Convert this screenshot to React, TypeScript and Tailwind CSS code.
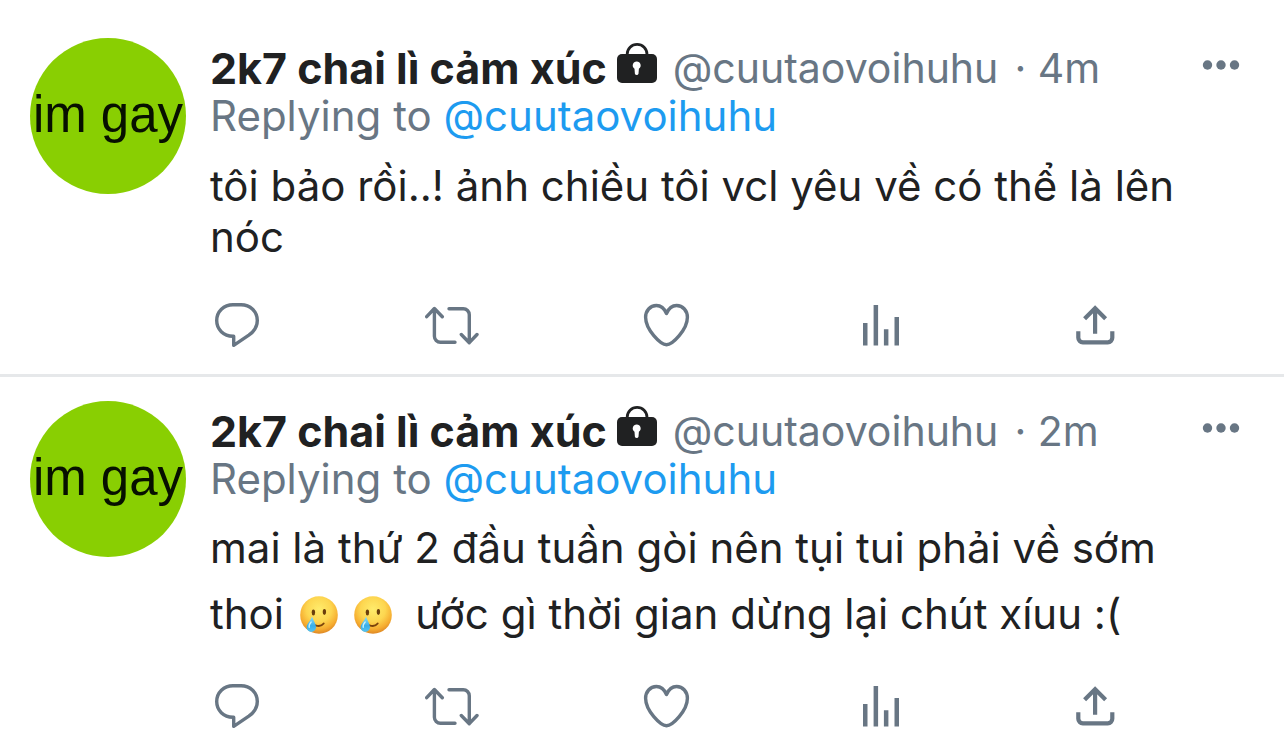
import type { ReactNode } from "react";

const USER = "@cuutaovoihuhu";

function Icon({ children, width = 4 }: { children: ReactNode; width?: number }) {
  return (
    <svg
      viewBox="0 0 54 54"
      className="block size-[54px]"
      fill="none"
      stroke="currentColor"
      strokeWidth={width}
      strokeLinecap="round"
      strokeLinejoin="round"
      aria-hidden="true"
    >
      {children}
    </svg>
  );
}

function Lock() {
  return (
    <svg viewBox="0 0 40 42" className="block h-[42px] w-10" aria-label="Protected account" role="img">
      <path d="M10.2 14V12.2a9.9 9.9 0 0 1 19.8 0V14" fill="none" stroke="#202122" strokeWidth="2.8" />
      <rect x="0" y="12" width="40" height="29" rx="5" fill="#202122" />
      <path d="M19.7 19.400a4 4 0 0 1 2.200 7.300l-.4 5a1.900 1.900 0 0 1-3.600 0l-.4-5a4 4 0 0 1 2.200-7.300z" fill="#fff" />
    </svg>
  );
}

function TearFace({ id }: { id: string }) {
  return (
    <svg viewBox="0 0 38 38" className="ml-1 inline-block size-[38px] align-[-5px]" aria-label="Smiling face with tear" role="img">
      <defs>
        <radialGradient id={id + "-face"} cx="0.5" cy="0.35" r="0.66">
          <stop offset="0" stopColor="#ffec6c" />
          <stop offset="0.5" stopColor="#fdd650" />
          <stop offset="0.8" stopColor="#f6ad30" />
          <stop offset="1" stopColor="#dc8424" />
        </radialGradient>
        <linearGradient id={id + "-tear"} x1="0" y1="0" x2="0" y2="1">
          <stop offset="0" stopColor="#8fe0f8" />
          <stop offset="0.6" stopColor="#39aee9" />
          <stop offset="1" stopColor="#55c5f2" />
        </linearGradient>
      </defs>
      <circle cx="19" cy="19" r="18.8" fill={"url(#" + id + "-face)"} />
      <ellipse cx="13.400" cy="16.500" rx="1.700" ry="2.900" fill="#6b3f0c" />
      <ellipse cx="24.400" cy="16" rx="1.700" ry="2.900" fill="#6b3f0c" />
      <path d="M15.500 29.300c3.200 1.200 6.300.6 8.200-1.800" fill="none" stroke="#7a430b" strokeWidth="1.900" strokeLinecap="round" />
      <path d="M12 20.500c1.500 4.500 4 7.500 4 10.700a4.700 4.700 0 0 1-9.400 0c0-3.200 4-6.200 5.400-10.700z" fill={"url(#" + id + "-tear)"} />
      <path d="M11.200 26c-1.800 2-2.500 3.600-2 5.400" fill="none" stroke="#c5f2fd" strokeWidth="1.300" strokeLinecap="round" />
    </svg>
  );
}

const ACTIONS: { label: string; icon: ReactNode }[] = [
  {
    label: "Reply",
    icon: (
      <Icon width={3.4}>
        <path d="M23 38.300C13.500 38 6.700 31.500 6.700 22.600 6.700 13.600 13.800 6.700 23 6.700h8c9.300 0 16.300 6.900 16.300 15.800 0 6.300-3.300 11-8.500 14.700L23.700 47.300v-9z" />
      </Icon>
    ),
  },
  {
    label: "Retweet",
    icon: (
      <Icon width={3.4}>
        <path d="M1.700 18.700l7.700-8.200 7.900 8.200M9.400 11v27.300a6 6 0 0 0 6 6H30" />
        <path d="M24 10.700h14.300a6 6 0 0 1 6 6V44M36.300 36.500l8 8.200 7.700-8.200" />
      </Icon>
    ),
  },
  {
    label: "Like",
    icon: (
      <Icon width={3.4}>
        <path d="M27.500 15.500C25.400 10.600 22.100 7.500 17.400 7.500 11.100 7.500 6.600 12.900 6.600 19.300c0 12.400 14.900 27.400 20.900 27.400s20.900-15 20.900-27.400c0-6.400-4.500-11.800-10.800-11.800-4.700 0-8 3.100-10.100 8z" />
      </Icon>
    ),
  },
  {
    label: "View analytics",
    icon: (
      <Icon>
        <path
          d="M9 25h4.500v22.400H9zM19.600 7h4.500v40.400h-4.500zM29.900 31.300h4.500v16.100h-4.500zM40.500 19H45v28.400h-4.500z"
          fill="currentColor"
          stroke="none"
        />
      </Icon>
    ),
  },
  {
    label: "Share",
    icon: (
      <svg viewBox="0 0 54 54" className="block size-[54px]" fill="none" stroke="currentColor" strokeWidth="4.200" aria-hidden="true">
        <path d="M27.100 35.800V10M16.600 20.700L27.100 10.200l10.500 10.500M10.300 33.300v6.500a4.500 4.500 0 0 0 4.500 4.500h25a4.500 4.500 0 0 0 4.500-4.500v-6.500" />
      </svg>
    ),
  },
];

function Tweet({ age, children }: { age: string; children: ReactNode }) {
  return (
    <article className="flex gap-6 border-b-[3px] border-[#e6e8ea] px-[30px] pt-6 pb-[22px]">
      <div className="flex size-[156px] shrink-0 items-center justify-center overflow-hidden rounded-full bg-[#89cf02]">
        <span className="pb-1 font-['Liberation_Sans',sans-serif] text-[51px] leading-none whitespace-nowrap text-[#071000]">
          im gay
        </span>
      </div>
      <div className="min-w-0 grow pt-1.5">
        <header className="flex items-start justify-between">
          <div className="flex h-12 items-center text-[41px] leading-[48px] whitespace-nowrap">
            <h2 className="text-[43px] font-bold">2k7 chai lì cảm xúc</h2>
            <span className="ml-2.5 pb-2.5">
              <Lock />
            </span>
            <a href="#profile" className="ml-4 text-[#687684]">
              {USER}
            </a>
            <span className="ml-4 text-[#687684]">· {age}</span>
          </div>
          <button type="button" aria-label="More" className="mr-3 pt-[15px] text-[#687684]">
            <svg viewBox="0 0 40 12" className="block h-3 w-10" fill="currentColor" aria-hidden="true">
              <circle cx="5.500" cy="6" r="4.700" />
              <circle cx="19" cy="6" r="4.700" />
              <circle cx="32.500" cy="6" r="4.700" />
            </svg>
          </button>
        </header>
        <p className="leading-[48px] text-[#687684]">
          Replying to{" "}
          <a href="#profile" className="text-[#1d9bf0]">
            {USER}
          </a>
        </p>
        <div className="mr-14">{children}</div>
        <div className="mr-[132px] flex justify-between text-[#687684]">
          {ACTIONS.map(({ label, icon }) => (
            <button key={label} type="button" aria-label={label}>
              {icon}
            </button>
          ))}
        </div>
      </div>
    </article>
  );
}

export default function App() {
  return (
    <main className="min-h-screen bg-white pt-[14px] font-['Inter',sans-serif] text-[42px] text-[#202122]">
      <Tweet age="4m">
        <p className="mt-5 mb-9 leading-[51px]">tôi bảo rồi..! ảnh chiều tôi vcl yêu về có thể là lên nóc</p>
      </Tweet>
      <Tweet age="2m">
        <p className="mt-3 mb-8 leading-[66px]">
          mai là thứ 2 đầu tuần gòi nên tụi tui phải về sớm thoi <TearFace id="a" /> <TearFace id="b" />
          {"\u00a0 "}ước gì thời gian dừng lại chút xíuu :(
        </p>
      </Tweet>
    </main>
  );
}
